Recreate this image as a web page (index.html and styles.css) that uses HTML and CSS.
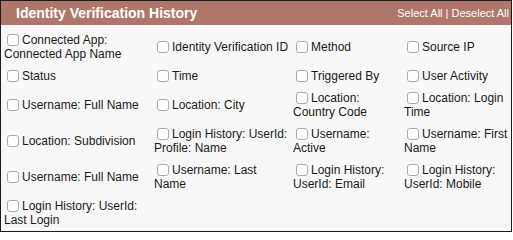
FILE: index.html
```html
<!DOCTYPE html>
<html lang="en">
<head>
<meta charset="utf-8">
<title>Identity Verification History</title>
<link rel="stylesheet" href="styles.css">
</head>
<body>
<div class="panel">
  <div class="panel-header">
    <h2 class="panel-title">Identity Verification History</h2>
    <div class="panel-actions"><a href="#" class="action">Select All</a> | <a href="#" class="action">Deselect All</a></div>
  </div>
  <div class="field-grid">
    <label class="field"><input type="checkbox" class="check">Connected App: Connected App Name</label>
    <label class="field"><input type="checkbox" class="check">Identity Verification ID</label>
    <label class="field"><input type="checkbox" class="check">Method</label>
    <label class="field"><input type="checkbox" class="check">Source IP</label>

    <label class="field"><input type="checkbox" class="check">Status</label>
    <label class="field"><input type="checkbox" class="check">Time</label>
    <label class="field"><input type="checkbox" class="check">Triggered By</label>
    <label class="field"><input type="checkbox" class="check">User Activity</label>

    <label class="field"><input type="checkbox" class="check">Username: Full Name</label>
    <label class="field"><input type="checkbox" class="check">Location: City</label>
    <label class="field"><input type="checkbox" class="check">Location: Country Code</label>
    <label class="field"><input type="checkbox" class="check">Location: Login Time</label>

    <label class="field"><input type="checkbox" class="check">Location: Subdivision</label>
    <label class="field"><input type="checkbox" class="check">Login History: UserId: Profile: Name</label>
    <label class="field"><input type="checkbox" class="check">Username: Active</label>
    <label class="field"><input type="checkbox" class="check">Username: First Name</label>

    <label class="field"><input type="checkbox" class="check">Username: Full Name</label>
    <label class="field"><input type="checkbox" class="check">Username: Last Name</label>
    <label class="field"><input type="checkbox" class="check">Login History: UserId: Email</label>
    <label class="field"><input type="checkbox" class="check">Login History: UserId: Mobile</label>

    <label class="field"><input type="checkbox" class="check">Login History: UserId: Last Login</label>
  </div>
</div>
</body>
</html>
```

FILE: styles.css
```css
html, body {
  margin: 0;
  padding: 0;
  background: #ffffff;
}

body {
  font-family: "Liberation Sans", Arial, sans-serif;
  font-size: 12px;
  color: #1a1a1a;
}

.panel {
  width: 512px;
  box-sizing: border-box;
  border: 1px solid #1c1c1c;
  background: #f8f8f8;
}

.panel-header {
  display: flex;
  justify-content: space-between;
  align-items: center;
  height: 24px;
  padding: 0 2px 0 15px;
  background: #b0766c;
  color: #ffffff;
}

.panel-title {
  margin: 0;
  font-size: 14px;
  font-weight: bold;
  line-height: 16px;
}

.panel-actions {
  font-size: 11px;
  line-height: 13px;
  color: #ffffff;
}

.action {
  color: #ffffff;
  text-decoration: none;
}

.field-grid {
  display: grid;
  grid-template-columns: 150px 139px 111px 1fr;
  align-items: center;
  padding-top: 4px;
}

.field {
  display: block;
  padding: 4px 0 4px 3px;
  line-height: 14px;
}

.check {
  -webkit-appearance: none;
  appearance: none;
  box-sizing: border-box;
  width: 12px;
  height: 12px;
  margin: 0 3px 0 3px;
  border: 1px solid #ababab;
  border-radius: 3px;
  background: #ffffff;
  vertical-align: middle;
  position: relative;
  top: -1px;
}
```
